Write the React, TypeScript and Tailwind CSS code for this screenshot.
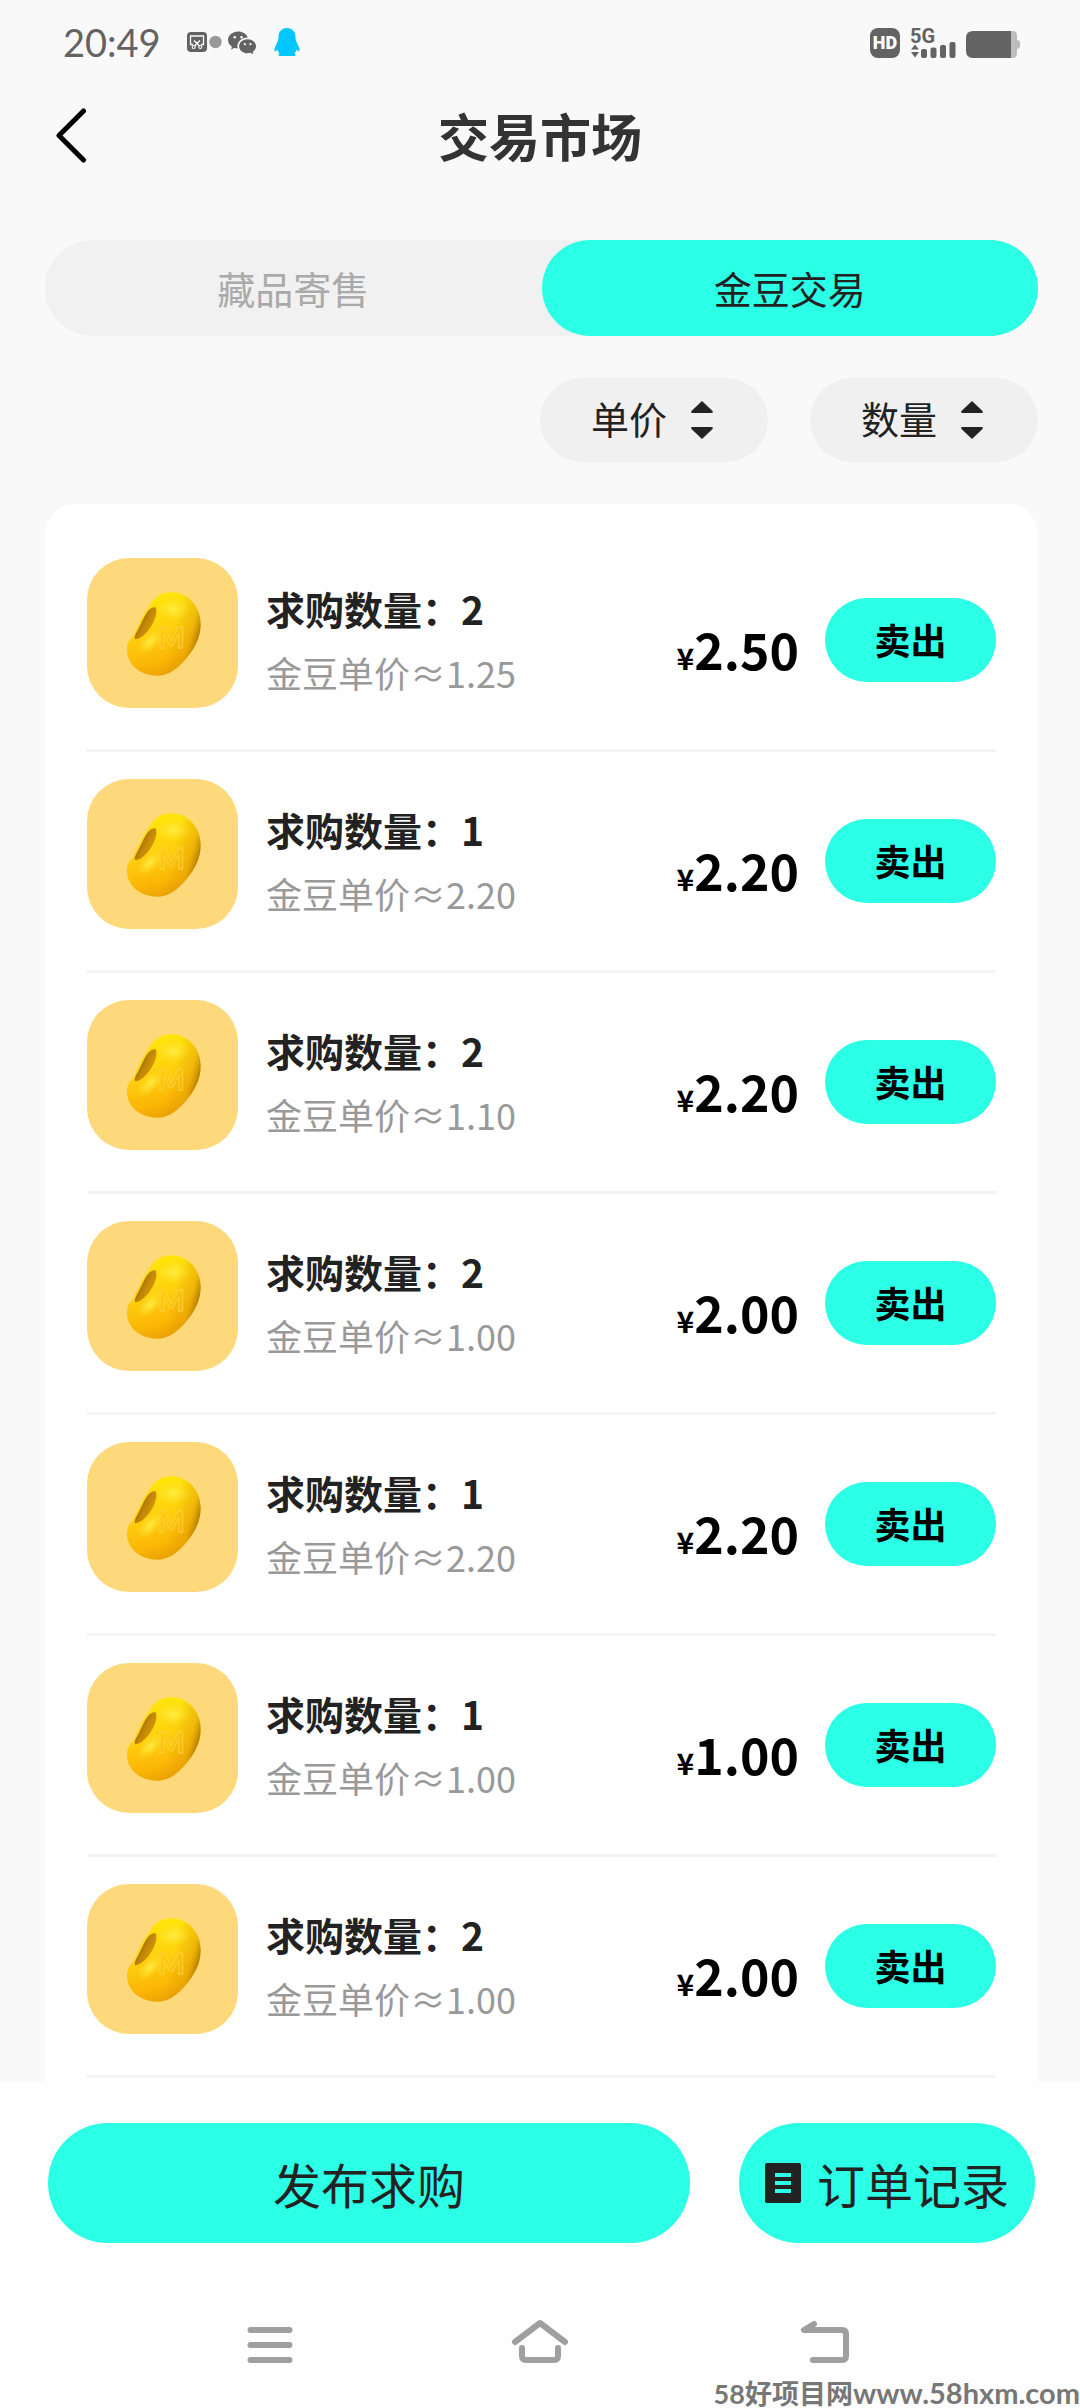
import { useState } from 'react'
import { BsWechat } from 'react-icons/bs'

interface Order {
  id: number
  count: number
  unit: string
  total: string
}

const orders: Order[] = [
  { id: 1, count: 2, unit: '1.25', total: '2.50' },
  { id: 2, count: 1, unit: '2.20', total: '2.20' },
  { id: 3, count: 2, unit: '1.10', total: '2.20' },
  { id: 4, count: 2, unit: '1.00', total: '2.00' },
  { id: 5, count: 1, unit: '2.20', total: '2.20' },
  { id: 6, count: 1, unit: '1.00', total: '1.00' },
  { id: 7, count: 2, unit: '1.00', total: '2.00' },
]

const tabs = ['藏品寄售', '金豆交易']

function StatusBar() {
  return (
    <div className="flex h-[84px] items-center justify-between pl-[63px] pr-[60px] text-[#636363]">
      <div className="flex items-center">
        <span className="font-[Lato,sans-serif] text-[38px] leading-[46px]">20:49</span>
        <svg className="ml-[26px] h-5 w-[35px]" viewBox="0 0 35 20" fill="none">
          <rect width="20" height="20" rx="4" fill="#636363" />
          <path d="M6 12.500H3.500V4H16.500V12.500H14M7 8.500l5.500 5.500M13 8.500L7.500 14" stroke="#fff" strokeWidth="1.300" />
          <circle cx="6.700" cy="15" r="1.500" stroke="#fff" strokeWidth="1.100" />
          <circle cx="13.300" cy="15" r="1.500" stroke="#fff" strokeWidth="1.100" />
          <circle cx="28.500" cy="10" r="6.200" fill="#999" />
        </svg>
        <BsWechat className="ml-[6px] size-7" />
        <svg className="ml-[18px] h-[28px] w-[26px]" viewBox="0 0 26 28" fill="#00c8ff">
          <path d="M13 0C7.500 0 4.500 4 4.500 9c0 3-.8 4.500-2 7C1 19 0 21.500.5 23c.6.900 2-.5 3-1.600.4 1.600 1 2.800 2 3.800-1.500.8-1.500 2.800.5 2.800h14c2 0 2-2 .5-2.800 1-1 1.600-2.200 2-3.800 1 1.100 2.400 2.500 3 1.600.5-1.500-.5-4-2-7-1.200-2.500-2-4-2-7 0-5-3-9-8.500-9z" />
        </svg>
      </div>

      <div className="flex items-end pb-1">
        <span className="flex size-[30px] items-center justify-center rounded-lg bg-[#636363] font-[Roboto,sans-serif] text-[18px] font-black leading-[24px] text-white">
          HD
        </span>
        <svg className="ml-[10px] h-[36px] w-[46px]" viewBox="0 -6 46 36" fill="#636363">
          <text x="0" y="15" fontFamily="Roboto, sans-serif" fontSize="20" fontWeight="700">5G</text>
          <path d="M1 21.500L5 16.500l4 5zM1 24l4 5.500L9 24z" />
          <rect x="11" y="21" width="6" height="9" rx="2" />
          <rect x="20.500" y="19.500" width="6" height="10.500" rx="2" />
          <rect x="30" y="17" width="6" height="13" rx="2" />
          <rect x="39.500" y="14" width="6" height="16" rx="2" />
        </svg>
        <svg className="ml-[10px] h-[27px] w-[54px]" viewBox="0 0 54 27">
          <path d="M44 0h3q4 0 4 5v4q3 0 3 3v3q0 3-3 3v4q0 5-4 5h-3z" fill="#bdbdbd" />
          <path d="M7 0h38v27H7q-7 0-7-7V7q0-7 7-7z" fill="#636363" />
        </svg>
      </div>
    </div>
  )
}

function BeanDefs() {
  return (
    <svg className="absolute size-0" aria-hidden="true">
      <defs>
        <linearGradient id="bean-body" x1="0.4" y1="0" x2="0.6" y2="1">
          <stop offset="0" stopColor="#ffe70a" />
          <stop offset="0.45" stopColor="#ffd00e" />
          <stop offset="0.8" stopColor="#fbb606" />
          <stop offset="1" stopColor="#eaa004" />
        </linearGradient>
        <linearGradient id="bean-edge" x1="0.6" y1="0.5" x2="1" y2="0.62">
          <stop offset="0" stopColor="#d08a00" stopOpacity="0" />
          <stop offset="0.6" stopColor="#d99400" stopOpacity="0.4" />
          <stop offset="1" stopColor="#8a5800" stopOpacity="0.95" />
        </linearGradient>
        <radialGradient id="bean-shine">
          <stop offset="0" stopColor="#fff04a" stopOpacity="0.9" />
          <stop offset="1" stopColor="#ffe030" stopOpacity="0" />
        </radialGradient>
        <linearGradient id="bean-dent" x1="0.3" y1="0.3" x2="0.7" y2="0.6">
          <stop offset="0" stopColor="#936500" />
          <stop offset="0.5" stopColor="#c08406" />
          <stop offset="1" stopColor="#d09208" />
        </linearGradient>
      </defs>
    </svg>
  )
}

function Bean() {
  const body =
    'M275 127C322 127 362 168 362 222C362 262 344 296 318 326C296 352 268 377 232 377C182 377 141 345 141 300C141 280 146 270 158 260C170 240 184 198 206 170C220 146 238 127 275 127Z'
  return (
    <svg className="h-[150px] w-[151px] shrink-0 rounded-[42px] bg-[#fdd97b]" viewBox="21 24 453 450">
      <path d={body} fill="url(#bean-body)" />
      <path d={body} fill="url(#bean-edge)" />
      <ellipse cx="280" cy="178" rx="52" ry="34" fill="url(#bean-shine)" />
      <ellipse cx="210" cy="275" rx="50" ry="26" transform="rotate(-45 210 275)" fill="url(#bean-shine)" />
      <path d="M227 172C233 186 227 210 210 234C196 254 178 268 166 268C161 262 168 250 178 232C190 206 206 166 227 172Z" fill="url(#bean-dent)" />
      <text x="234" y="295" fontFamily="Lato, sans-serif" fontSize="84" fontWeight="900" fill="#f8c01a" fillOpacity="0.3" stroke="#ffd440" strokeOpacity="0.7" strokeWidth="4">
        M
      </text>
    </svg>
  )
}

function SortButton({ label }: { label: string }) {
  return (
    <button className="flex h-[84px] w-[228px] items-center justify-center gap-6 rounded-full bg-[#f0f0f0] pr-1 text-[38px] text-[#222]">
      <span className="pb-1 leading-[56px]">{label}</span>
      <svg className="h-[38px] w-[22px]" viewBox="0 0 22 38" fill="#222">
        <path d="M11 0L21.500 10q1 2-1 2h-19q-2 0-1-2z" />
        <path d="M11 38L21.500 28q1-2-1-2h-19q-2 0-1 2z" />
      </svg>
    </button>
  )
}

function OrderRow({ order }: { order: Order }) {
  return (
    <li className="flex border-b-3 border-[#f4f4f4] pb-[41px] pt-[27px]">
      <Bean />
      <div className="ml-7 flex-1 pt-[22px]">
        <h2 className="text-[39px] font-bold leading-[56px] text-[#222]">求购数量：{order.count}</h2>
        <p className="mt-2 text-[36px] leading-[56px] text-[#999]">金豆单价≈{order.unit}</p>
      </div>
      <p className="mr-[26px] pt-[54px] font-bold leading-[72px] text-black">
        <span className="text-[30px]">¥</span>
        <span className="text-[50px]">{order.total}</span>
      </p>
      <button className="mt-10 h-[84px] w-[171px] rounded-full bg-[#2bffe6] pb-[2px] text-[36px] font-bold text-black">卖出</button>
    </li>
  )
}

export default function App() {
  const [active, setActive] = useState(tabs[1])

  return (
    <div className="relative flex min-h-screen flex-col bg-[#f9f9f9] font-['Noto_Sans_CJK_SC',sans-serif]">
      <BeanDefs />
      <StatusBar />

      <header className="grid h-[102px] grid-cols-[1fr_auto_1fr] items-center">
        <button className="ml-[55px] w-8" aria-label="返回">
          <svg className="h-[56px] w-8" viewBox="0 0 32 56" fill="none" stroke="#000" strokeWidth="5" strokeLinecap="round" strokeLinejoin="round">
            <path d="M28.500 4L4 28.500L28.500 53" />
          </svg>
        </button>
        <h1 className="text-[51px] font-bold leading-[72px] text-[#333]">交易市场</h1>
      </header>

      <main className="flex-1 pl-[45px] pr-[42px] pt-[54px]">
        <div className="flex h-24 rounded-full bg-[#f1f1f1]">
          {tabs.map((t) => (
            <button
              key={t}
              onClick={() => setActive(t)}
              className={`flex-1 rounded-full pb-[2px] text-[38px] ${active === t ? 'bg-[#2bffe6] text-[#222]' : 'text-[#aaa]'}`}
            >
              {t}
            </button>
          ))}
        </div>

        <div className="mt-[42px] flex justify-end gap-[42px]">
          <SortButton label="单价" />
          <SortButton label="数量" />
        </div>

        <ul className="mt-[42px] rounded-t-[30px] bg-white px-[42px] pb-1 pt-[27px]">
          {orders.map((o) => (
            <OrderRow key={o.id} order={o} />
          ))}
        </ul>
      </main>

      <footer className="bg-[#fefefe]">
        <div className="flex gap-[49px] pb-[39px] pl-12 pr-[45px] pt-[41px] text-[48px] text-[#222]">
          <button className="h-[120px] flex-1 rounded-full bg-[#2bffe6]">发布求购</button>
          <button className="flex h-[120px] w-[296px] items-center justify-center gap-4 rounded-full bg-[#2bffe6]">
            <svg className="h-10 w-9" viewBox="0 0 36 40">
              <rect width="36" height="40" rx="2" fill="#222" />
              <path d="M10 12h16M10 20h16M10 28h16" stroke="#2bffe6" strokeWidth="4" />
            </svg>
            订单记录
          </button>
        </div>

        {/* system navigation */}
        <nav className="grid h-[126px] grid-cols-3 items-center justify-items-center px-[12.5%]">
          <button aria-label="最近任务">
            <svg className="h-[54px] w-[90px]" viewBox="0 0 90 54" stroke="#9f9f9f" strokeWidth="6" strokeLinecap="round">
              <path d="M25.500 12h39M25.500 27h39M25.500 42h39" />
            </svg>
          </button>
          <button aria-label="主页">
            <svg className="h-[54px] w-[90px]" viewBox="0 0 90 54" fill="none" stroke="#9f9f9f" strokeWidth="6" strokeLinecap="round" strokeLinejoin="round">
              <path d="M20 24L45 5L70 24M27 30v8q0 4 4 4h28q4 0 4-4v-8" />
            </svg>
          </button>
          <button aria-label="后退">
            <svg className="h-[54px] w-[90px]" viewBox="0 0 90 54" fill="none" stroke="#9f9f9f" strokeWidth="6" strokeLinecap="round" strokeLinejoin="round">
              <path d="M49 6L39 12H77q4 0 4 4v22q0 4-4 4H48" />
            </svg>
          </button>
        </nav>
      </footer>

      <p className="absolute bottom-0 right-0 font-[Lato,'Noto_Sans_CJK_SC',sans-serif] text-[27px] font-bold leading-[28px] text-[#777]">
        58好项目网<span className="text-[29px]">www.58hxm.com</span>
      </p>
    </div>
  )
}
